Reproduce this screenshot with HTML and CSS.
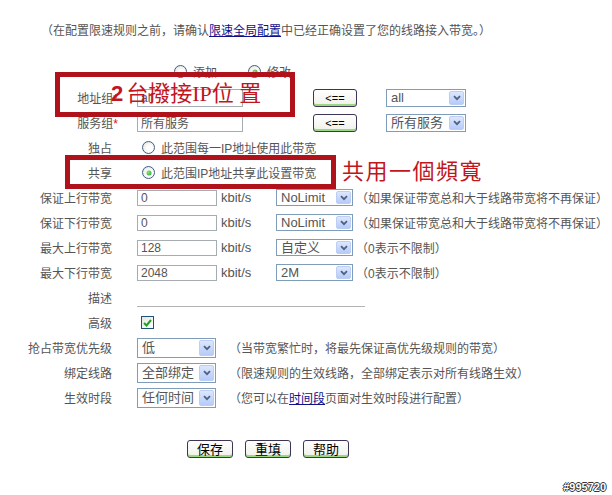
FILE: index.html
```html
<!DOCTYPE html>
<html lang="zh-CN">

<head>
    <meta charset="UTF-8">
    <title>限速规则</title>
    <link rel="stylesheet" href="styles.css">
</head>

<body>
    <div class="page">
        <p class="intro">（在配置限速规则之前，请确认<a href="#">限速全局配置</a>中已经正确设置了您的线路接入带宽。）</p>

        <div class="form">
            <div class="row row-mode">
                <span class="label"></span>
                <div class="field mode">
                    <span class="radio"></span><span class="opt">添加</span>
                    <span class="radio on"></span><span class="opt">修改</span>
                </div>
            </div>
            <div class="row">
                <span class="label req">地址组<i>*</i></span>
                <div class="field">
                    <input class="text" type="text" value="all">
                    <button class="btn btn-pick">&lt;==</button>
                    <div class="select sel-pick"><span class="sel-text">all</span><span class="sel-arrow"><svg width="8" height="6" viewBox="0 0 8 6"><path d="M1 1.2 L4 4.2 L7 1.2" /></svg></span></div>
                </div>
            </div>
            <div class="row">
                <span class="label req">服务组<i>*</i></span>
                <div class="field">
                    <input class="text" type="text" value="所有服务">
                    <button class="btn btn-pick">&lt;==</button>
                    <div class="select sel-pick"><span class="sel-text">所有服务</span><span class="sel-arrow"><svg width="8" height="6" viewBox="0 0 8 6"><path d="M1 1.2 L4 4.2 L7 1.2" /></svg></span></div>
                </div>
            </div>
            <div class="row">
                <span class="label">独占</span>
                <div class="field choice">
                    <span class="radio"></span><span>此范围每一IP地址使用此带宽</span>
                </div>
            </div>
            <div class="row">
                <span class="label">共享</span>
                <div class="field choice">
                    <span class="radio on"></span><span>此范围IP地址共享此设置带宽</span>
                </div>
            </div>
            <div class="row">
                <span class="label">保证上行带宽</span>
                <div class="field">
                    <input class="text num" type="text" value="0">
                    <span class="unit">kbit/s</span>
                    <div class="select sel-rate"><span class="sel-text">NoLimit</span><span class="sel-arrow"><svg width="8" height="6" viewBox="0 0 8 6"><path d="M1 1.2 L4 4.2 L7 1.2" /></svg></span></div>
                    <span class="hint">（如果保证带宽总和大于线路带宽将不再保证）</span>
                </div>
            </div>
            <div class="row">
                <span class="label">保证下行带宽</span>
                <div class="field">
                    <input class="text num" type="text" value="0">
                    <span class="unit">kbit/s</span>
                    <div class="select sel-rate"><span class="sel-text">NoLimit</span><span class="sel-arrow"><svg width="8" height="6" viewBox="0 0 8 6"><path d="M1 1.2 L4 4.2 L7 1.2" /></svg></span></div>
                    <span class="hint">（如果保证带宽总和大于线路带宽将不再保证）</span>
                </div>
            </div>
            <div class="row">
                <span class="label">最大上行带宽</span>
                <div class="field">
                    <input class="text num" type="text" value="128">
                    <span class="unit">kbit/s</span>
                    <div class="select sel-rate"><span class="sel-text">自定义</span><span class="sel-arrow"><svg width="8" height="6" viewBox="0 0 8 6"><path d="M1 1.2 L4 4.2 L7 1.2" /></svg></span></div>
                    <span class="hint">（0表示不限制）</span>
                </div>
            </div>
            <div class="row">
                <span class="label">最大下行带宽</span>
                <div class="field">
                    <input class="text num" type="text" value="2048">
                    <span class="unit">kbit/s</span>
                    <div class="select sel-rate"><span class="sel-text">2M</span><span class="sel-arrow"><svg width="8" height="6" viewBox="0 0 8 6"><path d="M1 1.2 L4 4.2 L7 1.2" /></svg></span></div>
                    <span class="hint">（0表示不限制）</span>
                </div>
            </div>
            <div class="row">
                <span class="label">描述</span>
                <div class="field">
                    <input class="text line" type="text" value="">
                </div>
            </div>
            <div class="row">
                <span class="label">高级</span>
                <div class="field">
                    <span class="check"><svg width="9" height="8" viewBox="0 0 9 8"><path d="M1 4 L3.5 6.5 L8 1" /></svg></span>
                </div>
            </div>
            <div class="row">
                <span class="label">抢占带宽优先级</span>
                <div class="field">
                    <div class="select sel-wide"><span class="sel-text">低</span><span class="sel-arrow"><svg width="8" height="6" viewBox="0 0 8 6"><path d="M1 1.2 L4 4.2 L7 1.2" /></svg></span></div>
                    <span class="hint wide">（当带宽繁忙时，将最先保证高优先级规则的带宽）</span>
                </div>
            </div>
            <div class="row">
                <span class="label">绑定线路</span>
                <div class="field">
                    <div class="select sel-wide"><span class="sel-text">全部绑定</span><span class="sel-arrow"><svg width="8" height="6" viewBox="0 0 8 6"><path d="M1 1.2 L4 4.2 L7 1.2" /></svg></span></div>
                    <span class="hint wide">（限速规则的生效线路，全部绑定表示对所有线路生效）</span>
                </div>
            </div>
            <div class="row">
                <span class="label">生效时段</span>
                <div class="field">
                    <div class="select sel-wide"><span class="sel-text">任何时间</span><span class="sel-arrow"><svg width="8" height="6" viewBox="0 0 8 6"><path d="M1 1.2 L4 4.2 L7 1.2" /></svg></span></div>
                    <span class="hint wide">（您可以在<a href="#">时间段</a>页面对生效时段进行配置）</span>
                </div>
            </div>
        </div>

        <div class="actions">
            <button class="btn btn-main">保存</button>
            <button class="btn btn-main">重填</button>
            <button class="btn btn-main">帮助</button>
        </div>

        <div class="stamp">#995720</div>

        <!-- red annotations drawn over the form -->
        <div class="mark mark-ip"></div>
        <div class="mark mark-share"></div>
        <div class="note note-ip"><b>2</b>台撥接IP位 置</div>
        <div class="note note-share">共用一個頻寬</div>
    </div>
</body>

</html>
```

FILE: styles.css
```css
* {
    margin: 0;
    padding: 0;
    box-sizing: border-box;
}

body {
    background-color: #fff;
    font-family: "Liberation Sans", "Noto Sans CJK SC", sans-serif;
    font-size: 12px;
    color: #555;
}

.page {
    position: relative;
    width: 612px;
    height: 495px;
    overflow: hidden;
}

a {
    color: #10108a;
    text-decoration: underline;
}

.intro {
    padding: 22px 0 0 41px;
    line-height: 18px;
}

.form {
    margin-top: 18px;
}

.row {
    display: flex;
    align-items: center;
    height: 25px;
}

.row-mode {
    height: 27px;
}

.label {
    flex: none;
    width: 112px;
    margin-right: 25px;
    text-align: right;
    white-space: nowrap;
}

.label.req {
    width: 118px;
    margin-right: 19px;
}

.label i {
    font-style: normal;
    color: #e01010;
}

.field {
    display: flex;
    align-items: center;
    white-space: nowrap;
}

.mode {
    padding-left: 37px;
}

.mode .opt {
    margin-left: 6px;
    width: 55px;
}

.choice {
    padding-left: 5px;
    gap: 6px;
}

/* inputs */
.text {
    width: 106px;
    height: 18px;
    border: 1px solid #a5acb2;
    padding: 0 3px;
    font-family: "Liberation Sans", "Noto Sans CJK SC", sans-serif;
    font-size: 12px;
    color: #555;
    background-color: #fff;
    outline: none;
}

.text.num {
    width: 80px;
    height: 16px;
}

.text.line {
    width: 228px;
    border-width: 0 0 1px 0;
    border-color: #b4b4b4;
}

.unit {
    width: 59px;
    padding-left: 4px;
    font-size: 13px;
}

.hint {
    margin-left: 3px;
}

.hint.wide {
    margin-left: 13px;
}

/* selects drawn as XP style combo boxes */
.select {
    display: flex;
    align-items: center;
    height: 18px;
    border: 1px solid #7f9db9;
    background-color: #fff;
    padding: 1px 1px 1px 4px;
    color: #555;
}

.sel-text {
    flex: 1;
    font-size: 13px;
    line-height: 14px;
    overflow: hidden;
}

.sel-arrow {
    display: flex;
    align-items: center;
    justify-content: center;
    width: 15px;
    height: 100%;
    border: 1px solid #bccdf6;
    border-radius: 2px;
    background: linear-gradient(#dde7fd, #b6cbf8);
}

.sel-arrow svg path {
    fill: none;
    stroke: #4d6185;
    stroke-width: 1.8;
}

.sel-pick {
    width: 80px;
    margin-left: 29px;
}

.sel-rate {
    width: 77px;
    height: 17px;
}

.sel-wide {
    width: 79px;
    height: 20px;
}

/* radios and checkbox */
.radio {
    position: relative;
    flex: none;
    width: 13px;
    height: 13px;
    border: 1px solid #3a5f8a;
    border-radius: 50%;
    background: radial-gradient(circle at 60% 60%, #fff 30%, #dcdcd4);
}

.radio.on::after {
    content: "";
    position: absolute;
    left: 50%;
    top: 50%;
    width: 5px;
    height: 5px;
    border-radius: 50%;
    transform: translate(-50%, -50%);
    background: radial-gradient(circle at 40% 40%, #8ae27a, #21a121);
}

.check {
    display: flex;
    align-items: center;
    justify-content: center;
    width: 13px;
    height: 13px;
    margin-left: 4px;
    border: 1px solid #1c5180;
    background: linear-gradient(135deg, #e6e6e0, #fff);
}

.check svg path {
    fill: none;
    stroke: #21a121;
    stroke-width: 2;
}

/* buttons */
.btn {
    border: 1px solid #3c3556;
    border-radius: 3px;
    background: linear-gradient(#fff, #f0f0ea);
    box-shadow: inset 0 -2px 0 #9ad884;
    color: #000;
    font-family: "Liberation Sans", "Noto Sans CJK SC", sans-serif;
    cursor: pointer;
}

.btn-pick {
    width: 44px;
    height: 18px;
    margin-left: 70px;
    font-size: 11px;
    line-height: 14px;
}

.btn-main {
    width: 46px;
    height: 18px;
    font-size: 13px;
    line-height: 15px;
}

.actions {
    display: flex;
    gap: 12px;
    margin-top: 30px;
    padding-left: 187px;
}

.stamp {
    margin-top: 23px;
    padding-right: 6px;
    text-align: right;
    font-family: "Liberation Sans", sans-serif;
    font-size: 11px;
    font-weight: bold;
    line-height: 12px;
    color: #fff;
    text-shadow: 1px 0 #333, -1px 0 #333, 0 1px #333, 0 -1px #333;
}

/* red annotations */
.mark {
    position: absolute;
    border: 5px solid #b0121c;
}

.mark-ip {
    left: 55px;
    top: 72px;
    width: 240px;
    height: 45px;
}

.mark-share {
    left: 65px;
    top: 155px;
    width: 271px;
    height: 34px;
}

.note {
    position: absolute;
    color: #c0161e;
    font-family: "Liberation Serif", "Noto Sans CJK TC", serif;
    font-size: 22px;
    line-height: 24px;
    white-space: pre;
}

.note b {
    font-family: "Liberation Sans", sans-serif;
    margin-right: 3px;
}

.note-ip {
    left: 111px;
    top: 82px;
}

.note-share {
    left: 342px;
    top: 160px;
    letter-spacing: 1.5px;
}
```
